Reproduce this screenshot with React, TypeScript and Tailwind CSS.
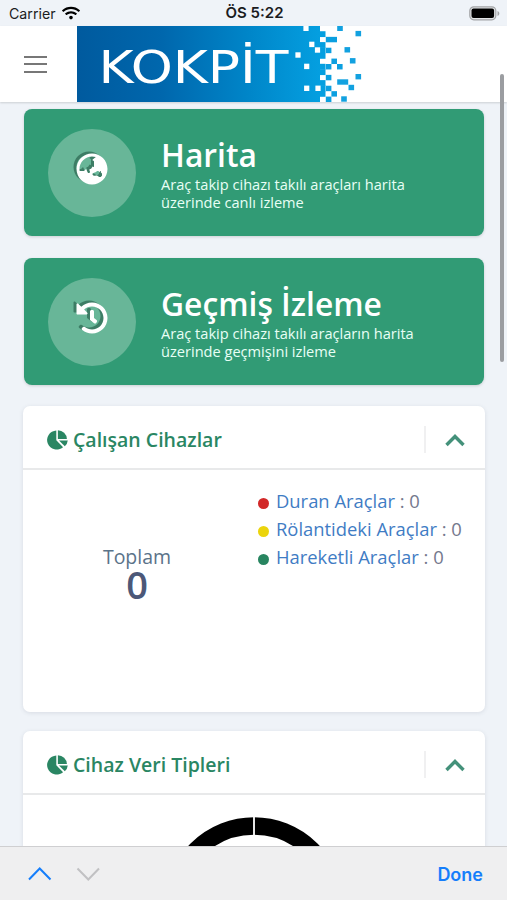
import React from "react";
import { FaGlobeAsia, FaHistory, FaWifi } from "react-icons/fa";

const CELL = 5.43;

// [column, row, width in cells, color]
const pixels: [number, number, number, string][] = [
  [2, 2, 2, "#0b9fe0"],
  [2, 4, 1, "#0b9fe0"],
  [3, 6, 1, "#0b9fe0"],
  [2, 7, 1, "#0b9fe0"],
  [4, 7, 1, "#0b9fe0"],
  [2, 9, 1, "#0b9fe0"],
  [2, 11, 1, "#0b9fe0"],
  [3, 12, 1, "#0b9fe0"],
  [2, 13, 1, "#0b9fe0"],
];

// free floating squares, centre points inside the logo
const loose: [number, number, number, string][] = [
  [263, 2.3, 5.6, "#12a1e0"],
  [281.3, 7.6, 5.6, "#12a1e0"],
  [270.3, 23.8, 5.6, "#12a1e0"],
  [275.7, 34.8, 5.6, "#12a1e0"],
  [281.3, 50.7, 5.6, "#12a1e0"],
  [265.7, 56, 11, "#12a1e0"],
  [274.3, 61.5, 5.6, "#12a1e0"],
  [267, 73, 5.6, "#12a1e0"],
  [229, 2.3, 5.2, "#fff"],
  [234.8, 18.4, 5.2, "#fff"],
  [240.5, 24, 5.2, "#fff"],
  [221, 29, 5.2, "#fff"],
  [229.7, 40.4, 5.2, "#fff"],
  [229.7, 62.3, 5.2, "#fff"],
  [241, 62.3, 5.2, "#fff"],
];

// how many cells the solid area reaches past its base edge, per row
const edge = [0, 1, 0, 1, 1, 1, 0, 1, 1, 0, 1, 1, 1, 0];

function Logo() {
  return (
    <svg className="block shrink-0" width="290" height="76" viewBox="0 0 290 76">
      <defs>
        <linearGradient id="logo" x1="0" y1="0" x2="1" y2="0">
          <stop offset="0" stopColor="#005a9e" />
          <stop offset="0.35" stopColor="#0067ad" />
          <stop offset="0.7" stopColor="#0085c8" />
          <stop offset="1" stopColor="#049fe0" />
        </linearGradient>
      </defs>
      <rect width="243" height="76" fill="url(#logo)" />
      {edge.map((n, row) =>
        n ? <rect key={row} x="242.5" y={row * CELL - 0.2} width="6" height={CELL + 0.4} fill="#049fe0" /> : null
      )}
      {pixels.map(([col, row, w, fill], i) => (
        <rect key={i} x={237.6 + col * 5.6} y={row * CELL} width={w * 5.6} height={CELL} fill={fill} />
      ))}
      {loose.map(([x, y, w, fill], i) => (
        <rect key={i} x={x - w / 2} y={y - 2.7} width={w} height="5.4" fill={fill} />
      ))}
      <text
        x="21.5"
        y="57"
        fontSize="44"
        fontFamily="'DejaVu Sans', sans-serif"
        fill="#fff"
        textLength="190"
        lengthAdjust="spacingAndGlyphs"
      >
        KOKPİT
      </text>
    </svg>
  );
}

function StatusBar() {
  return (
    <div className="h-[26px] shrink-0 grid grid-cols-3 items-center pt-px pl-[9px] pr-[7px] font-[Inter,sans-serif] text-[#1b1c1e]">
      <div className="flex items-center gap-[6px]">
        <span className="text-[14.200px]">Carrier</span>
        <FaWifi className="w-[18px] h-[16px] text-black" />
      </div>
      <span className="text-center text-[15px] font-semibold">ÖS 5:22</span>
      <svg className="justify-self-end" width="31" height="15" viewBox="0 0 31 15">
        <rect x="0.8" y="0.8" width="26" height="13" rx="4" fill="#e4e6e8" stroke="#a2a4a6" strokeWidth="1.2" />
        <rect x="2.5" y="2.5" width="22.6" height="9.6" rx="2" fill="#000" />
        <path d="M28.5 5v5c1.3-.6 1.8-1.5 1.8-2.5S29.800 5.600 28.500 5z" fill="#a2a4a6" />
      </svg>
    </div>
  );
}

interface MenuCardProps {
  title: string;
  lines: string[];
  icon: React.ReactNode;
}

function MenuCard({ title, lines, icon }: MenuCardProps) {
  return (
    <div className="h-[127px] rounded-[8px] bg-[#319b75] shadow-[0_1px_3px_rgba(0,0,0,0.15)] flex items-center pl-[24px] text-white">
      <div className="w-[88px] h-[88px] shrink-0 rounded-full bg-[#68b698] flex justify-center pt-[24px]">
        {icon}
      </div>
      <div className="ml-[25px] pt-[2px]">
        <h2 className="text-[31.800px] leading-[38px] pb-px font-semibold">{title}</h2>
        <p className="text-[14.600px] leading-[18px] text-[#e8fff5]">
          {lines.map((line) => (
            <span key={line} className="block whitespace-nowrap">{line}</span>
          ))}
        </p>
      </div>
    </div>
  );
}

function PieIcon() {
  return (
    <svg width="21" height="20" viewBox="0 0 21 20" fill="#2a8663">
      <path d="M9.300 0.600V10.300L16.100 17.300A9.700 9.500 0 1 1 9.300 0.600z" />
      <path d="M10.900 0.200A9.300 9.300 0 0 1 19.900 9H10.900z" />
      <path d="M12 10.600H20.800A9 9 0 0 1 17.800 16.300z" />
    </svg>
  );
}

function Panel({ title, className, children }: { title: string; className: string; children: React.ReactNode }) {
  return (
    <section className={`bg-white rounded-[7px] shadow-[0_1px_4px_rgba(60,70,90,0.13)] ${className}`}>
      <header className="h-[64px] border-b-2 border-[#e8e9ea] flex items-center pl-[24px] pr-[19px] pt-[5px]">
        <PieIcon />
        <h3 className="ml-[5px] pt-px text-[19.500px] font-semibold text-[#2a8663] whitespace-nowrap">{title}</h3>
        <div className="ml-auto w-[42px] h-[27px] border-l-2 border-[#f0f0f1] flex items-center justify-end">
          <svg width="21" height="14" viewBox="0 0 21 14" fill="none" stroke="#44917a" strokeWidth="3.400">
            <path d="M1.500 12l8.500-8.500 8.500 8.500" />
          </svg>
        </div>
      </header>
      {children}
    </section>
  );
}

const statuses = [
  { label: "Duran Araçlar", value: 0, dot: "bg-[#d22828]" },
  { label: "Rölantideki Araçlar", value: 0, dot: "bg-[#ebd40c]" },
  { label: "Hareketli Araçlar", value: 0, dot: "bg-[#288560]" },
];

export default function App() {
  return (
    <div className="w-[507px] h-[900px] overflow-hidden flex flex-col bg-[#eff3f8] font-['Open_Sans','Noto_Sans',sans-serif] relative">
      <StatusBar />

      <nav className="h-[76px] shrink-0 bg-white flex items-center shadow-[0_1px_2px_rgba(0,0,0,0.15)] z-10">
        <div className="w-[77px] pl-[24px] flex flex-col gap-[5.500px]">
          <span className="w-[23px] h-[2px] bg-[#777]" />
          <span className="w-[23px] h-[2px] bg-[#777]" />
          <span className="w-[23px] h-[2px] bg-[#777]" />
        </div>
        <Logo />
      </nav>

      <main className="flex-1 min-h-0 overflow-hidden pt-[7px] pl-[23px] pr-[22px]">
        <div className="px-px flex flex-col gap-[22px]">
          <MenuCard
            title="Harita"
            lines={["Araç takip cihazı takılı araçları harita", "üzerinde canlı izleme"]}
            icon={<FaGlobeAsia className="w-[32px] h-[32px] drop-shadow-[-3px_-2px_0_#3d7d65]" />}
          />
          <MenuCard
            title="Geçmiş İzleme"
            lines={["Araç takip cihazı takılı araçların harita", "üzerinde geçmişini izleme"]}
            icon={<FaHistory className="w-[32px] h-[32px] drop-shadow-[-3px_-2px_0_#3d7d65]" />}
          />
        </div>

        <Panel title="Çalışan Cihazlar" className="mt-[21px] h-[306px]">
          <div className="flex">
            <div className="w-[228px] pt-[75px] text-center">
              <div className="text-[19.500px] leading-[24px] text-[#5b7389]">Toplam</div>
              <div className="text-[38px] leading-[30px] font-semibold text-[#4c5878]">0</div>
            </div>
            <ul className="pt-[17px] pl-[7px] text-[18.400px] leading-[28px]">
              {statuses.map((s) => (
                <li key={s.label} className="flex items-center whitespace-pre text-[#74788d]">
                  <span className={`w-[11px] h-[11px] mr-[7px] mt-[4px] rounded-full ${s.dot}`} />
                  <span className="text-[#3f7cc4]">{s.label}</span>
                  <span> : {s.value}</span>
                </li>
              ))}
            </ul>
          </div>
        </Panel>

        <Panel title="Cihaz Veri Tipleri" className="mt-[19px] h-[306px]">
          <svg className="block mx-auto mt-[21px]" width="182" height="182" viewBox="0 0 182 182">
            <circle cx="91" cy="91" r="81" fill="none" stroke="#000" strokeWidth="17.500" />
            <path d="M91 0v20" stroke="#fff" strokeWidth="1.800" />
          </svg>
        </Panel>
      </main>

      <footer className="h-[54px] shrink-0 bg-[#efeff0] border-t border-[#cfcfd1] flex items-center pl-[28px] pr-[24px] z-10">
        <svg width="72" height="16" viewBox="0 0 72 16" fill="none" strokeWidth="2">
          <path d="M1 13.500L11.700 2.500L22.500 13.500" stroke="#157efb" />
          <path d="M49.500 2.500L60.300 13.500L71 2.500" stroke="#c1c1c3" />
        </svg>
        <span className="ml-auto pt-px font-[Inter,sans-serif] text-[18px] font-semibold text-[#157efb]">Done</span>
      </footer>

      {/* scroll indicator */}
      <div className="absolute right-[3px] top-[74px] w-[4px] h-[288px] rounded-full bg-[#9b9da1] z-20" />
    </div>
  );
}
